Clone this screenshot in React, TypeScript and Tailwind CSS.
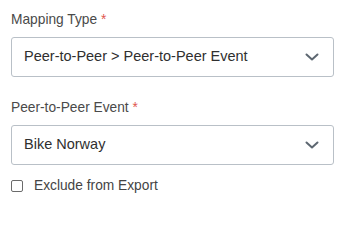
function Chevron() {
  return (
    <svg width="14" height="8" viewBox="0 0 14 8" fill="none" className="shrink-0">
      <path d="M1.5 1.5 L7 6.5 L12.5 1.5" stroke="#5d6771" strokeWidth="2" strokeLinecap="round" strokeLinejoin="round" />
    </svg>
  );
}

function Field({ label, value, className }: { label: string; value: string; className?: string }) {
  return (
    <div className={className}>
      <div className="text-[13.75px] leading-[20px] text-[#4a4a4a]">
        {label} <span className="text-[#e0574f]">*</span>
      </div>
      <div className="mt-[7px] flex h-[40px] items-center justify-between rounded-[3px] border border-[#b9c0c7] bg-white pl-[12px] pr-[14px]">
        <span className="text-[14.5px] text-[#2f2f2f]">{value}</span>
        <Chevron />
      </div>
    </div>
  );
}

export default function App() {
  return (
    <div
      className="h-[200px] w-[346px] bg-white pl-[11px] pr-[12px] pt-[10px]"
      style={{ fontFamily: '"Liberation Sans", Arial, sans-serif' }}
    >
      <Field label="Mapping Type" value="Peer-to-Peer > Peer-to-Peer Event" />
      <Field label="Peer-to-Peer Event" value="Bike Norway" className="mt-[21px]" />
      <label className="mt-[13px] flex items-center gap-[11px]">
        <span className="h-[12px] w-[12px] rounded-[2px] border border-[#6b6b6b] bg-white" />
        <span className="text-[13.75px] leading-[16px] text-[#444]">Exclude from Export</span>
      </label>
    </div>
  );
}
